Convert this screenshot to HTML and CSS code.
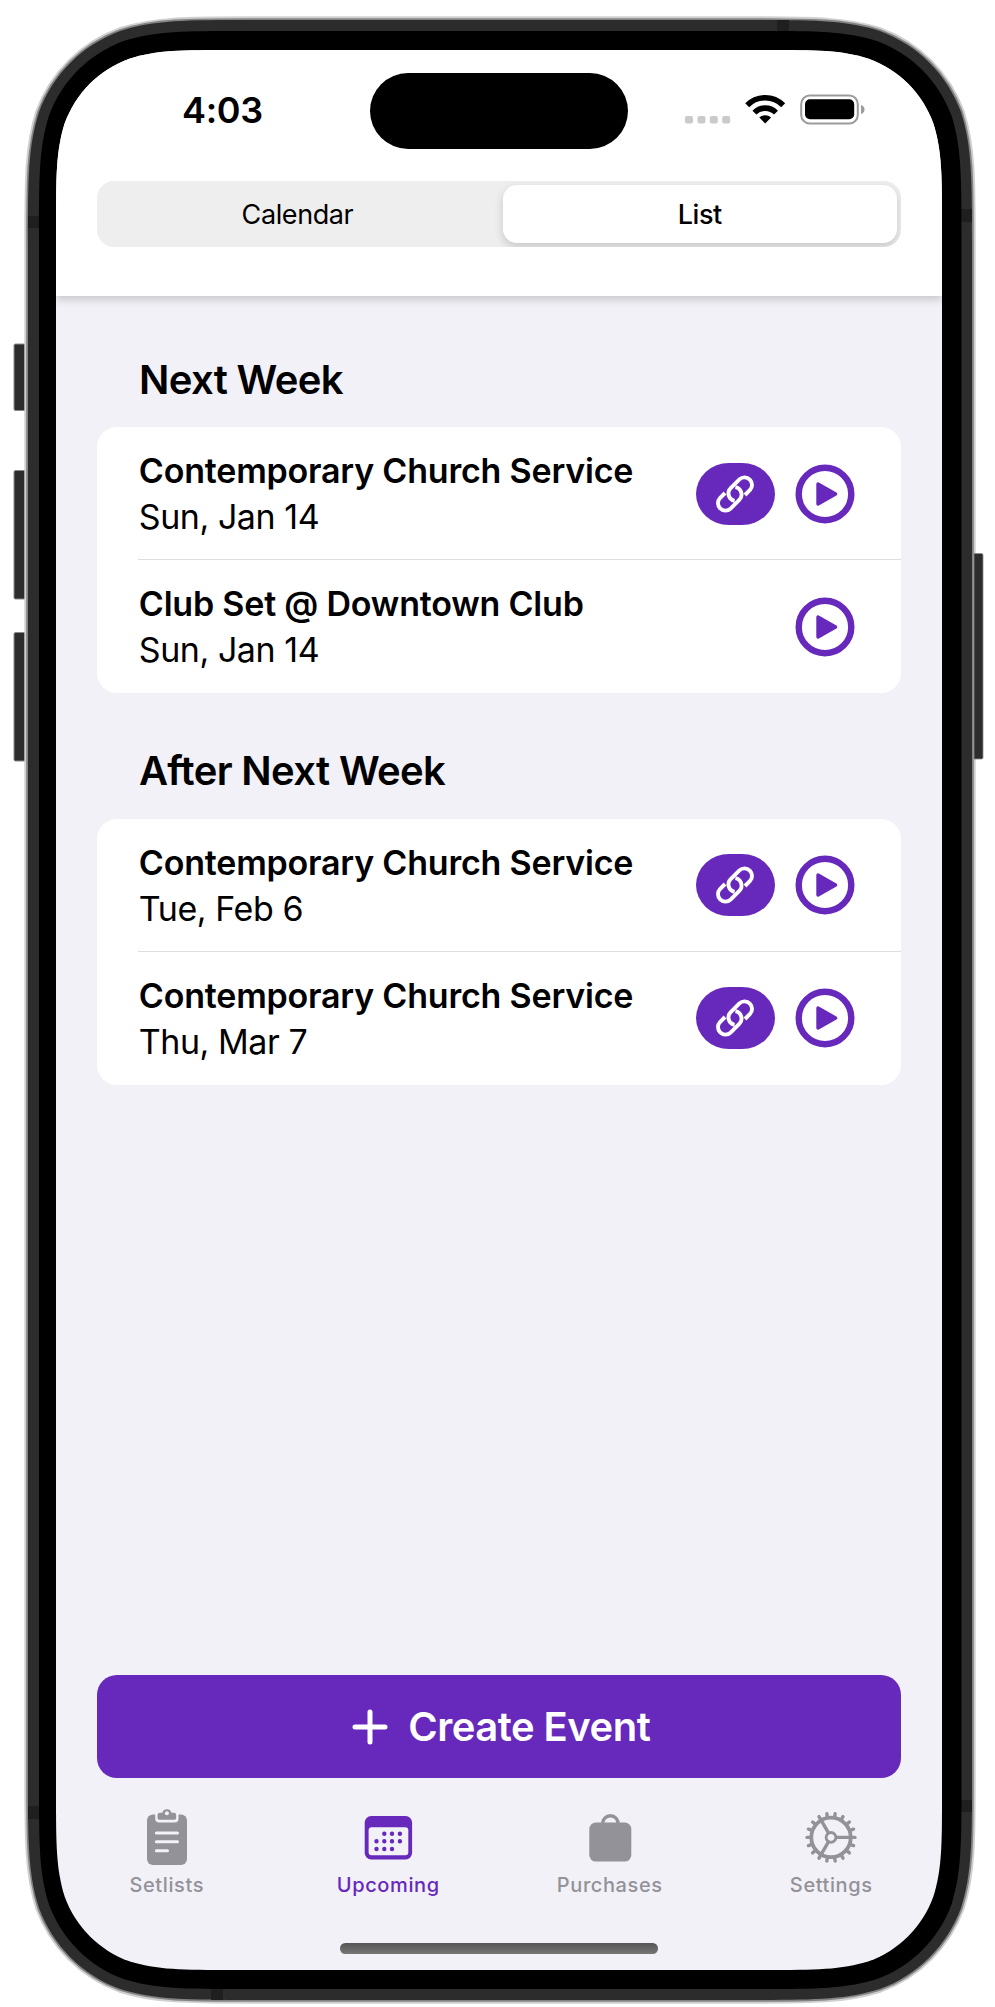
FILE: index.html
```html
<!DOCTYPE html>
<html lang="en">
<head>
<meta charset="utf-8">
<title>Upcoming</title>
<link rel="stylesheet" href="styles.css">
</head>
<body>
<svg class="defs" width="0" height="0" aria-hidden="true">
  <symbol id="link" viewBox="0 0 40 40">
    <g fill="none" stroke="#fff" stroke-width="3.900">
      <path id="hook" d="M19.600 26.800A7.500 7.500 0 0 1 15.700 14.100L24.400 5.400A7.500 7.500 0 0 1 35 16L30 21"/>
      <use href="#hook" transform="rotate(180 20 20)"/>
    </g>
  </symbol>
  <symbol id="play" viewBox="0 0 60 60">
    <circle cx="30" cy="30" r="26.3" fill="none" stroke="#6728bc" stroke-width="6.4"/>
    <path d="M23 20 V40 L40.6 30 Z" fill="#6728bc" stroke="#6728bc" stroke-width="3.4" stroke-linejoin="round"/>
  </symbol>
</svg>
<div class="device">
  <svg class="frame" width="995" height="2007" viewBox="0 0 995 2007" aria-hidden="true">
    <g fill="#2c2c2c" stroke="#8a8a8a" stroke-width="1">
      <rect x="14" y="344" width="14" height="66.500" rx="1.500"/>
      <rect x="14" y="470.500" width="14" height="128.500" rx="1.500"/>
      <rect x="14" y="632.500" width="14" height="128.500" rx="1.500"/>
    </g>
    <defs>
      <path id="body" d="M251.2 20H748.8c64.3 0 96.4 0 131 10.9c37.8 13.8 67.5 43.5 81.3 81.3c10.9 34.6 10.9 66.7 10.9 131V1776.8c0 64.3 0 96.4-10.9 131c-13.8 37.8-43.5 67.5-81.3 81.3c-34.6 10.9-66.7 10.9-131 10.9H251.2c-64.3 0-96.4 0-131-10.9c-37.8-13.8-67.5-43.5-81.3-81.3c-10.9-34.6-10.9-66.7-10.9-131V243.2c0-64.3 0-96.4 10.9-131c13.8-37.8 43.5-67.5 81.3-81.3c34.6-10.9 66.7-10.9 131-10.9z"/>
    </defs>
    <use href="#body" stroke="#d0d0d0" stroke-width="7.400"/>
    <use href="#body" stroke="#848484" stroke-width="3.600"/>
    <use href="#body" fill="#2c2c2c"/>
    <path d="M974 553.500h7.500q1.500 0 1.500 1.500v202.500q0 1.500-1.500 1.500H974z" fill="#2c2c2c" stroke="#8a8a8a" stroke-width=".800"/>
    <path d="M28 216h11v12H28zM777 20h12v11h-12zM961 209h11v13h-11zM28 1806h11v13H28zM961 1800h11v12h-11zM211 1989h12v11h-12z" fill="#1f1f1f"/>
    <path d="M243.8 31H756.700c58.9 0 88.4 0 120.2 10c34.6 12.7 61.9 40 74.6 74.6c10 31.8 10 61.3 10 120.2V1784.200c0 58.9 0 88.4-10 120.2c-12.700 34.600-40 61.900-74.600 74.600c-31.800 10-61.300 10-120.2 10H243.8c-58.9 0-88.4 0-120.2-10c-34.600-12.700-61.900-40-74.600-74.600c-10-31.800-10-61.300-10-120.2V235.800c0-58.9 0-88.4 10-120.2c12.700-34.600 40-61.900 74.600-74.600c31.800-10 61.300-10 120.2-10z" fill="#000"/>
  </svg>
  <div class="screen">
    <header class="header">
      <div class="status">
        <span class="time">4:03</span>
        <span class="island"></span>
        <svg class="indicators" width="182" height="34" viewBox="0 0 182 34">
          <g fill="#cacaca">
            <rect x="0" y="24" width="8" height="7.500" rx="2"/><rect x="12.500" y="24" width="8" height="7.500" rx="2"/><rect x="24.800" y="24" width="8" height="7.500" rx="2"/><rect x="37.200" y="24" width="8" height="7.500" rx="2"/>
          </g>
          <g fill="none" stroke="#000" stroke-width="5.600">
            <path d="M62.200 13.200 A25.300 25.300 0 0 1 98.200 13.200"/>
            <path d="M69.400 20.600 A15.200 15.200 0 0 1 91 20.600"/>
          </g>
          <path d="M80.200 31.500 L74.300 25.600 A8.400 8.400 0 0 1 86.100 25.600 Z"/>
          <rect x="116.200" y="3.500" width="56.600" height="28" rx="8.500" fill="none" stroke="#9b9b9b" stroke-width="2"/>
          <rect x="120" y="7.300" width="49.200" height="20" rx="5"/>
          <path d="M176 13 C180.700 14.500 180.700 20.500 176 22 Z" fill="#9b9b9b"/>
        </svg>
      </div>
      <div class="segments">
        <div class="segment first">Calendar</div>
        <div class="segment selected">List</div>
      </div>
    </header>
    <main class="content">
      <h2 class="heading">Next Week</h2>
      <section class="card">
        <div class="row">
          <div class="info"><div class="title">Contemporary Church Service</div><div class="date">Sun, Jan 14</div></div>
          <span class="pill"><svg width="40" height="40"><use href="#link"/></svg></span>
          <svg class="play" width="60" height="60"><use href="#play"/></svg>
        </div>
        <div class="row">
          <div class="info"><div class="title">Club Set @ Downtown Club</div><div class="date">Sun, Jan 14</div></div>
          <svg class="play" width="60" height="60"><use href="#play"/></svg>
        </div>
      </section>
      <h2 class="heading">After Next Week</h2>
      <section class="card later">
        <div class="row">
          <div class="info"><div class="title">Contemporary Church Service</div><div class="date">Tue, Feb 6</div></div>
          <span class="pill"><svg width="40" height="40"><use href="#link"/></svg></span>
          <svg class="play" width="60" height="60"><use href="#play"/></svg>
        </div>
        <div class="row">
          <div class="info"><div class="title">Contemporary Church Service</div><div class="date">Thu, Mar 7</div></div>
          <span class="pill"><svg width="40" height="40"><use href="#link"/></svg></span>
          <svg class="play" width="60" height="60"><use href="#play"/></svg>
        </div>
      </section>
    </main>
    <div class="create">
      <svg width="36" height="36" viewBox="0 0 36 36"><path d="M18 3V33M3 18H33" stroke="#fff" stroke-width="5" stroke-linecap="round"/></svg>
      <span>Create Event</span>
    </div>
    <nav class="tabs">
      <div class="tab">
        <svg width="64" height="64" viewBox="0 0 64 64">
          <rect x="12" y="9.500" width="40" height="50.500" rx="6" fill="#939298"/>
          <path d="M20.200 9V13.500Q20.200 17.500 24.200 17.500H39.500Q43.500 17.500 43.500 13.500V9Z" fill="#f2f1f7"/>
          <path d="M22.500 10.200Q22.500 7.800 25 7.800H27.300A4.800 4.800 0 0 1 36.500 7.800H38.700Q41.200 7.800 41.200 10.200V12.200Q41.200 14.800 38.700 14.800H25Q22.500 14.800 22.500 12.200Z" fill="#939298"/>
          <circle cx="31.900" cy="8.300" r="2" fill="#f2f1f7"/>
          <path d="M21.300 28H42.500M21.300 36.700H42.500M21.300 45.700H32.500" stroke="#f2f1f7" stroke-width="3" stroke-linecap="round"/>
        </svg>
        <span>Setlists</span>
      </div>
      <div class="tab active">
        <svg width="64" height="64" viewBox="0 0 64 64">
          <rect x="8.700" y="11" width="47.400" height="43.500" rx="6.500" fill="#6728bc"/>
          <rect x="12.600" y="22.300" width="39.700" height="28" rx="3" fill="#f2f1f7"/>
          <path d="M28.300 28.700h.01M36 28.700h.01M43.900 28.700h.01M20.500 36.300h.01M28.300 36.300h.01M36 36.300h.01M43.900 36.300h.01M20.500 44h.01M28.300 44h.01M36 44h.01" stroke="#6728bc" stroke-width="4.400" stroke-linecap="round"/>
        </svg>
        <span>Upcoming</span>
      </div>
      <div class="tab">
        <svg width="64" height="64" viewBox="0 0 64 64">
          <rect x="11.300" y="17.600" width="42" height="39" rx="6.500" fill="#939298"/>
          <path d="M24.500 19A7.900 8.300 0 0 1 40.300 19" fill="none" stroke="#939298" stroke-width="3.400"/>
        </svg>
        <span>Purchases</span>
      </div>
      <div class="tab">
        <svg width="64" height="64" viewBox="0 0 64 64">
          <g transform="translate(32 32.400)" fill="none" stroke="#939298" stroke-width="3.400" stroke-linecap="round">
            <circle r="19.700" stroke-width="3.800"/>
            <circle r="4.900" stroke-width="2.800"/>
            <path d="M6 0H19M-3 -5.200L-9.500 -16.500M-3 5.200L-9.500 16.500"/>
            <path id="cog" d="M-24 0H-21M21 0H24"/>
            <use href="#cog" transform="rotate(20)"/><use href="#cog" transform="rotate(40)"/><use href="#cog" transform="rotate(60)"/>
            <use href="#cog" transform="rotate(80)"/><use href="#cog" transform="rotate(100)"/><use href="#cog" transform="rotate(120)"/>
            <use href="#cog" transform="rotate(140)"/><use href="#cog" transform="rotate(160)"/>
          </g>
        </svg>
        <span>Settings</span>
      </div>
    </nav>
    <div class="home"></div>
  </div>
</div>
</body>
</html>
```
FILE: styles.css
```css
* { box-sizing: border-box; }
body {
  margin: 0;
  background: #fff;
  color: #000;
  font-family: Inter, "Liberation Sans", sans-serif;
}
svg { display: block; flex: none; }
.defs { position: absolute; }
.device {
  position: relative;
  width: 995px;
  height: 2007px;
  padding: 50px 53px 37px 56px;
  overflow: hidden;
}
.frame { position: absolute; left: 0; top: 0; fill: none; }
.screen {
  position: relative;
  display: flex;
  flex-direction: column;
  width: 886px;
  height: 1920px;
  background: #f2f1f7;
  clip-path: path("M177.3 0H708.7C759.7 0 785.3 0 812.7 8.7C842.8 19.6 866.4 43.2 877.3 73.3C886 100.7 886 126.3 886 177.3V1742.7C886 1793.7 886 1819.3 877.3 1846.7C866.4 1876.8 842.8 1900.4 812.7 1911.3C785.3 1920 759.7 1920 708.7 1920H177.3C126.3 1920 100.7 1920 73.3 1911.3C43.2 1900.4 19.6 1876.8 8.7 1846.7C0 1819.3 0 1793.7 0 1742.7V177.3C0 126.3 0 100.7 8.7 73.3C19.6 43.2 43.2 19.6 73.3 8.7C100.7 0 126.3 0 177.3 0Z");
}
.header {
  height: 246px;
  flex: none;
  background: #fff;
  box-shadow: 0 3px 9px rgba(0, 0, 0, .2);
}
.status {
  display: flex;
  height: 131px;
  padding: 23px 0 0 126px;
}
.time {
  width: 188px;
  padding-top: 15px;
  font-size: 36px;
  line-height: 44px;
  font-weight: 600;
  letter-spacing: -.3px;
}
.island {
  width: 258px;
  height: 76px;
  border-radius: 38px;
  background: #000;
}
.indicators { margin: 19px 0 0 57px; }
.segments {
  display: flex;
  width: 803.500px;
  height: 66px;
  margin-left: 41px;
  padding: 4px;
  border-radius: 17px;
  background: #eee;
  overflow: hidden;
}
.segment {
  flex: 1;
  border-radius: 14px;
  font-size: 27px;
  line-height: 59px;
  text-align: center;
  letter-spacing: -.4px;
}
.segment.first { padding-right: 9px; }
.segment.selected {
  flex: none;
  width: 393.500px;
  background: #fff;
  font-weight: 500;
  box-shadow: 0 4px 10px rgba(0, 0, 0, .16);
}
.content {
  height: 1379px;
  flex: none;
  padding: 6px 41px 0 41px;
}
.heading {
  margin: 53.5px 0 23.5px 42px;
  font-size: 40px;
  line-height: 48px;
  font-weight: 600;
  letter-spacing: -.65px;
}
.card {
  border-radius: 20px;
  background: #fff;
}
.card + .heading { margin-top: 54px; }
.later .info { padding-top: 1px; }
.row {
  display: flex;
  align-items: center;
  height: 133px;
  margin-left: 41px;
  padding-right: 46px;
}
.row + .row { box-shadow: 0 -1px 0 #dededf; }
.info {
  flex: 1;
  padding-left: .800px;
  font-size: 34px;
  line-height: 46px;
  white-space: nowrap;
}
.title { font-weight: 600; letter-spacing: -.2px; }
.date { letter-spacing: -.45px; }
.pill {
  display: flex;
  align-items: center;
  justify-content: center;
  width: 78.500px;
  height: 62px;
  margin-right: 20.500px;
  padding-right: .5px;
  border-radius: 33px / 31px;
  background: #6728bc;
}
.create {
  display: flex;
  flex: none;
  align-items: center;
  justify-content: center;
  gap: 20.500px;
  height: 103px;
  margin: 0 41px .5px 41px;
  padding-left: 4px;
  border-radius: 20px;
  background: #6728bc;
  color: #fff;
  font-size: 40px;
  font-weight: 600;
  letter-spacing: -.5px;
}
.tabs {
  display: flex;
  padding-top: 26.500px;
  height: 164.500px;
}
.tab {
  display: flex;
  flex: 1;
  flex-direction: column;
  align-items: center;
  gap: 3.500px;
  color: #939298;
  font-size: 20px;
  line-height: 24px;
  font-weight: 500;
  letter-spacing: .6px;
}
.tab.active { color: #6728bc; }
.home {
  width: 318px;
  height: 10.500px;
  margin-left: 284px;
  border-radius: 5.200px;
  background: linear-gradient(#555, #777);
}
```
